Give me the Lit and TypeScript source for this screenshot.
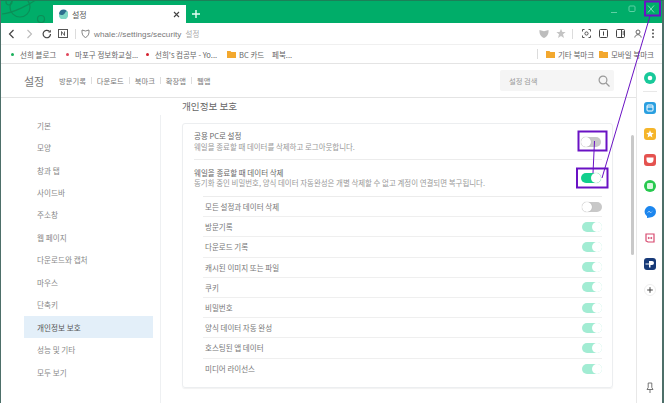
import { LitElement, html, css, svg } from "lit";
import { customElement } from "lit/decorators.js";

const FONT = `"Noto Sans CJK KR", "Noto Sans", sans-serif`;
const folder = html`<svg class="folder" width="9" height="8" viewBox="0 0 9 8"><path d="M0 1h3.4l1 1H9v6H0z" fill="#f3a82e"/></svg>`;
const mains = ["기본","모양","창과 탭","사이드바","주소창","웹 페이지","다운로드와 캡처","마우스","단축키","개인정보 보호","성능 및 기타","모두 보기"];
const subs = ["방문기록","다운로드 기록","캐시된 이미지 또는 파일","쿠키","비밀번호","양식 데이터 자동 완성","호스팅된 앱 데이터","미디어 라이선스"];

@customElement("app-root")
export class AppRoot extends LitElement {
  static styles = css`
    :host { display: block; width: 664px; height: 403px; overflow: hidden; position: relative; background: #fff; font-family: "Noto Sans CJK KR", "Noto Sans", sans-serif; color: #555; }
    * { box-sizing: border-box; }
    .window { width: 664px; height: 403px; display: flex; flex-direction: column; border-left: 1px solid #4d6f69; border-right: 2px solid #4d6f69; border-top: 1px solid #1c8058; }
    .title { height: 22px; background: #00ad69; display: flex; align-items: flex-end; padding-left: 52px; position: relative; flex: none; }
    .logo { position: absolute; left: 0; top: 0; }
    .tab { width: 133px; height: 18px; background: #fff; display: flex; align-items: center; padding: 0 6px; font-size: 8px; color: #555; gap: 4px; }
    .tab span { flex: 1; }
    .plus { width: 20px; height: 18px; display: flex; align-items: center; justify-content: center; }
    .winbtns { margin-left: auto; align-self: flex-start; display: flex; align-items: center; gap: 10px; padding: 1px 6px 0 0; height: 15px; }
    .toolbar { height: 21px; flex: none; display: flex; align-items: center; background: #fff; padding: 0 6px 0 7px; }
    .toolbar svg { flex: none; }
    .sep { width: 1px; height: 10px; background: #dcdcdc; flex: none; }
    .url { font-size: 8.1px; color: #777; margin-left: 4px; white-space: nowrap; font-family: "Liberation Sans", sans-serif; letter-spacing: .06px; }
    .url em { font-style: normal; color: #aaa; margin-left: 4px; font-family: "Noto Sans CJK KR", sans-serif; font-size: 7.5px; }
    .grow { flex: 1; }
    .bookmarks { height: 20px; flex: none; border-top: 1px solid #f0f0f0; border-bottom: 1px solid #e4e4e4; display: flex; align-items: center; padding-left: 10px; font-size: 7.5px; color: #666; white-space: nowrap; }
    .bm { display: flex; align-items: center; gap: 6px; }
    .dot { width: 3px; height: 3px; border-radius: 50%; flex: none; }
    .folder { flex: none; margin-right: 3px; }
    .main { flex: 1; min-height: 0; display: flex; }
    .page { flex: 1; min-width: 0; display: flex; flex-direction: column; background: #fff; position: relative; }
    .head { height: 34px; flex: none; border-bottom: 1px solid #e4e4e4; display: flex; align-items: center; padding: 0 22px 0 23px; }
    .head h1 { margin: 0; font-size: 11px; font-weight: 400; color: #777; width: 35px; }
    .nav { display: flex; align-items: center; font-size: 7.3px; color: #777; }
    .nav i { width: 1px; height: 7px; background: #ddd; margin: 0 5px; }
    .search { margin-left: auto; width: 114px; height: 21px; background: #f5f5f5; border-radius: 2px; display: flex; align-items: center; justify-content: space-between; padding: 0 4px 0 9px; font-size: 7.3px; color: #999; }
    .body { flex: 1; min-height: 0; display: flex; }
    .side { width: 160px; flex: none; padding: 16px 8px 0 23px; position: relative; }
    .side::after { content: ""; position: absolute; right: 0; top: 17px; bottom: 0; width: 1px; background: #eef0f2; }
    .side a { display: flex; align-items: center; height: 22.45px; padding-left: 13px; width: 129px; font-size: 7.6px; color: #888; }
    .side a.on { background: #e3eff9; color: #555; }
    .content { flex: 1; min-width: 0; padding-left: 21px; }
    .content h2 { margin: 0; height: 25px; font-size: 9.6px; font-weight: 400; color: #666; line-height: 17px; }
    .card { width: 431px; height: 265px; border: 1px solid #eceef0; border-radius: 3px; box-shadow: 0 1px 1px #f2f2f2; padding: 0 10px 0 11px; }
    .rowbig { height: 36px; display: flex; align-items: center; justify-content: space-between; border-bottom: 1px solid #ececec; padding-right: 1px; }
    .txt { font-size: 7.5px; line-height: 10.5px; color: #666; white-space: nowrap; }
    .txt small { display: block; font-size: 7.45px; color: #999; }
    .subs { border-top: 1px solid #ececec; margin-left: 9px; }
    .sub { height: 20.2px; display: flex; align-items: center; justify-content: space-between; border-bottom: 1px solid #efefef; padding-left: 2px; font-size: 7.5px; color: #777; }
    .sub:last-child { border-bottom: 0; }
    .tg { width: 20px; height: 10px; border-radius: 5px; background: #c8c8c8; position: relative; flex: none; }
    .tg::after { content: ""; position: absolute; left: 0; top: 0; width: 10px; height: 10px; border-radius: 50%; background: #fff; box-shadow: 0 0 1px #999; }
    .tg.on { background: #12cf8c; }
    .tg.on::after { left: 10px; box-shadow: 0 0 1px #6c9; }
    .tg.soft { background: #a2ecd3; }
    .tg.soft::after { left: 10px; box-shadow: none; }
    .scroll { position: absolute; left: 631px; top: 135px; width: 3px; height: 120px; background: #c9c9c9; border-radius: 2px; }
    .rail { width: 26px; flex: none; border-left: 1px solid #e8e8e8; background: #fff; display: flex; flex-direction: column; align-items: center; padding-top: 8px; height: 100%; }
    .rail .ic { width: 12px; height: 12px; flex: none; margin-bottom: 14px; display: block; }
    .rail hr { width: 14px; border: 0; border-top: 1px solid #e8e8e8; margin: -7px 0 10px; flex: none; }
    .rail .pin { margin-top: auto; margin-bottom: 9px; }
    .over { position: absolute; left: 0; top: 0; pointer-events: none; }
  `;

  render() {
    return html`<div class="window">
      <div class="title">
        <svg class="logo" width="52" height="22" viewBox="0 0 52 22" fill="none" stroke="#0b8f58" stroke-width="1.2">
          <circle cx="19" cy="6" r="10"/><path d="M1 13C12 12 28 4 36 -2"/><circle cx="40" cy="18" r="3.5"/><circle cx="8" cy="1" r="3"/>
        </svg>
        <div class="tab">
          <svg width="9" height="10" viewBox="0 0 9 10"><circle cx="4.5" cy="5" r="4.5" fill="#2d6f8f"/><path d="M0 5c2 2 5 1 6-1s2-2 3-1v4a4.5 4.5 0 0 1-9-2z" fill="#7fd7c4"/></svg>
          <span>설정</span>
          <svg width="7" height="7" viewBox="0 0 7 7" stroke="#444" stroke-width="1.1"><path d="M1 1l5 5M6 1L1 6"/></svg>
        </div>
        <div class="plus"><svg width="8" height="8" viewBox="0 0 8 8" stroke="#e8fff6" stroke-width="1.4"><path d="M4 0v8M0 4h8"/></svg></div>
        <div class="winbtns">
          <svg width="8" height="8" viewBox="0 0 8 8" stroke="#5fd0a4"><path d="M1 7.500h6"/></svg>
          <svg width="8" height="8" viewBox="0 0 8 8" fill="none" stroke="#5fd0a4"><rect x="1" y="1" width="6" height="5.500" rx="1"/></svg>
          <svg width="10" height="10" viewBox="0 0 10 10" stroke="#7fe0bb"><path d="M2 1.500l6 7M8 1.500l-6 7"/></svg>
        </div>
      </div>

      <div class="toolbar">
        <svg width="7" height="10" viewBox="0 0 7 10" fill="none" stroke="#444" stroke-width="1.2"><path d="M5.500 1L1.500 5l4 4"/></svg>
        <svg style="margin-left:11px" width="7" height="10" viewBox="0 0 7 10" fill="none" stroke="#bbb" stroke-width="1.1"><path d="M1.500 1l4 4-4 4"/></svg>
        <svg style="margin-left:9px" width="10" height="10" viewBox="0 0 10 10" fill="none" stroke="#444" stroke-width="1.2"><path d="M8.500 5a3.700 3.700 0 1 1-1.200-2.700"/><path d="M8.800 .8v2.600H6.200" fill="#444" stroke="none"/></svg>
        <svg style="margin-left:6px" width="10" height="9" viewBox="0 0 10 9" fill="none" stroke="#555"><rect x=".5" y=".5" width="9" height="8"/><path d="M3.500 6.500v-4l3 4v-4" stroke-width=".9"/></svg>
        <div class="sep" style="margin-left:7px"></div>
        <svg style="margin-left:5px" width="9" height="9" viewBox="0 0 9 9" fill="none" stroke="#777" stroke-width=".9"><path d="M1 1l3.500 1L8 1c.4 4-1 6.500-3.500 7.500C2 7.500.6 5 1 1z"/></svg>
        <span class="url">whale://settings/security<em>설정</em></span>
        <div class="grow"></div>
        <svg width="10" height="9" viewBox="0 0 10 9"><path d="M.5 1l4.500 1.200L9.500 1c.4 4-1.400 6.800-4.500 8C1.900 7.800.1 5 .5 1z" fill="#bdbdbd"/></svg>
        <svg style="margin-left:7px" width="10" height="9" viewBox="0 0 10 9"><path d="M5 0l1.400 3H9.600L7 5.200 8 9 5 7 2 9l1-3.800L.4 3h3.200z" fill="#c4c4c4"/></svg>
        <div class="sep" style="margin-left:6px"></div>
        <svg style="margin-left:9px" width="9" height="9" viewBox="0 0 9 9" fill="none" stroke="#555"><path d="M.5 2.500V.5h2M6.500.5h2v2M8.500 6.500v2h-2M2.500 8.500h-2v-2"/><circle cx="4.500" cy="4.500" r="1.600"/></svg>
        <svg style="margin-left:8px" width="9" height="9" viewBox="0 0 9 9" fill="none" stroke="#444"><rect x=".5" y=".5" width="8" height="8" rx="1"/><path d="M4.500 2.500v4"/></svg>
        <svg style="margin-left:8px" width="9" height="9" viewBox="0 0 9 9" fill="none" stroke="#444"><rect x=".5" y=".5" width="8" height="8" rx="1"/><path d="M5.500 .5v8M6.500 3h2M6.500 5h2"/></svg>
        <svg style="margin-left:9px" width="8" height="9" viewBox="0 0 8 9" fill="none" stroke="#666"><circle cx="4" cy="3" r="2"/><path d="M.8 8.500c.4-2 1.600-2.800 3.200-2.800s2.800.8 3.200 2.800"/></svg>
        <svg style="margin-left:10px;margin-right:2px" width="2" height="9" viewBox="0 0 2 9" fill="#444"><circle cx="1" cy="1" r=".9"/><circle cx="1" cy="4.500" r=".9"/><circle cx="1" cy="8" r=".9"/></svg>
      </div>

      <div class="bookmarks">
        <div class="bm" style="width:55px"><i class="dot" style="background:#19b05b"></i>선희 블로그</div>
        <div class="bm" style="width:80px"><i class="dot" style="background:#e0455a"></i>마포구 정보화교실...</div>
        <div class="bm" style="width:78px"><i class="dot" style="background:#d41f2c"></i>선희's 컴공부 - Yo...</div>
        <div class="bm" style="width:45px;gap:0;margin-left:3px">${folder}BC 카드</div>
        <div class="bm" style="width:40px">페북...</div>
        <div class="grow"></div>
        <div class="sep" style="margin-right:8px"></div>
        <div class="bm" style="gap:0;width:53px">${folder}기타 북마크</div>
        <div class="bm" style="gap:0;margin-right:8px">${folder}모바일 북마크</div>
      </div>

      <div class="main">
        <div class="page">
          <div class="head">
            <h1>설정</h1>
            <div class="nav">방문기록<i></i>다운로드<i></i>북마크<i></i>확장앱<i></i>웹앱</div>
            <div class="search">설정 검색
              <svg width="12" height="12" viewBox="0 0 12 12" fill="none" stroke="#999" stroke-width="1.2"><circle cx="5" cy="5" r="3.900"/><path d="M8 8l3.500 3.500"/></svg>
            </div>
          </div>
          <div class="body">
            <div class="side">
              ${mains.map((m) => html`<a class=${m === "개인정보 보호" ? "on" : ""}>${m}</a>`)}
            </div>
            <div class="content">
              <h2>개인정보 보호</h2>
              <div class="card">
                <div class="rowbig">
                  <div class="txt">공용 PC로 설정<small>웨일을 종료할 때 데이터를 삭제하고 로그아웃합니다.</small></div>
                  <div class="tg"></div>
                </div>
                <div class="rowbig" style="border-bottom:0">
                  <div class="txt">웨일을 종료할 때 데이터 삭제<small>동기화 중인 비밀번호, 양식 데이터 자동완성은 개별 삭제할 수 없고 계정이 연결되면 복구됩니다.</small></div>
                  <div class="tg on"></div>
                </div>
                <div class="subs">
                  <div class="sub">모든 설정과 데이터 삭제<div class="tg"></div></div>
                  ${subs.map((s) => html`<div class="sub">${s}<div class="tg soft"></div></div>`)}
                </div>
              </div>
            </div>
          </div>
        </div>
        <div class="rail">
          <svg class="ic" viewBox="0 0 12 12"><circle cx="6" cy="6" r="6" fill="#18c99a"/><circle cx="6" cy="6" r="2.300" fill="#fff"/></svg>
          <hr />
          <svg class="ic" viewBox="0 0 12 12"><rect width="12" height="12" rx="3" fill="#2a9fe0"/><rect x="3" y="3" width="6" height="6" rx="1" fill="none" stroke="#fff"/><path d="M3 5h6" stroke="#fff"/></svg>
          <svg class="ic" viewBox="0 0 12 12"><rect width="12" height="12" rx="3" fill="#f5b52a"/><path d="M6 2.200l1.100 2.500 2.700.2-2 1.800.6 2.700L6 8 3.600 9.400l.6-2.700-2-1.800 2.700-.2z" fill="#fff"/></svg>
          <svg class="ic" viewBox="0 0 12 12"><rect width="12" height="12" rx="3" fill="#e4524f"/><path d="M2.500 3.500h7v2a3.500 3.500 0 0 1-7 0z" fill="#fff"/></svg>
          <svg class="ic" viewBox="0 0 12 12"><circle cx="6" cy="6" r="6" fill="#27c94f"/><rect x="3" y="3" width="6" height="6" rx="1.200" fill="#d9f7df"/></svg>
          <svg class="ic" viewBox="0 0 12 12"><path d="M6 0a6 5.700 0 0 1 0 11.400L3 12v-1.700A5.700 5.700 0 0 1 6 0z" fill="#1c86ee"/><path d="M2.500 7.500l2.500-2.500 2 1.400L9.500 4 7 7 5 5.700z" fill="#fff"/></svg>
          <svg class="ic" viewBox="0 0 12 12" fill="none" stroke="#d8496f"><path d="M2 2h8v8H4l-2-1z" stroke-width="1.200"/><circle cx="4.700" cy="6" r=".6" fill="#d8496f"/><circle cx="7.300" cy="6" r=".6" fill="#d8496f"/></svg>
          <svg class="ic" viewBox="0 0 12 12"><rect width="12" height="12" rx="3" fill="#173a78"/><path d="M5 3h3a2 2 0 0 1 0 4H6.500v2.500H5zM1.500 5.500h4v1h-4z" fill="#fff"/></svg>
          <svg class="ic" viewBox="0 0 12 12" fill="none"><circle cx="6" cy="6" r="5.500" stroke="#eee"/><path d="M6 3.200v5.600M3.200 6h5.600" stroke="#444"/></svg>
          <svg class="ic pin" viewBox="0 0 12 12" fill="none" stroke="#666" stroke-width=".9"><path d="M4.200 1h3.600v4.500L9 7.500H3l1.200-2zM6 7.500V11"/></svg>
        </div>
      </div>
    </div>
    <div class="scroll"></div>
    <svg class="over" width="664" height="403" viewBox="0 0 664 403" fill="none" stroke="#6a12c4">
      ${svg`<rect x="645" y="1.500" width="15" height="14" stroke-width="2"/>
      <rect x="578.500" y="131.500" width="28" height="19" stroke-width="2"/>
      <rect x="577" y="168.500" width="30.500" height="19" stroke-width="2"/>
      <path d="M650 16L602 178M594.500 141L593 173" stroke-width="1"/>`}
    </svg>`;
  }
}
